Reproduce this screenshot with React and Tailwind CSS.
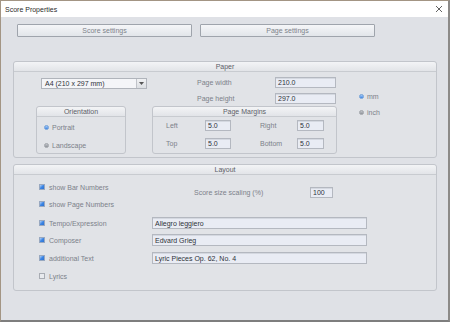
import React from "react";

const font = "font-['Liberation_Sans',Arial,sans-serif]";

function Group({ title, className, children }) {
    return (
        <div className={`border border-[#c2c5cb] rounded-[3px] bg-[#e1e3e7] flex flex-col ${className}`}>
            <div className="h-[10px] shrink-0 border-b border-[#c8cbd0] rounded-t-[3px] bg-linear-to-b from-[#f3f4f6] to-[#e2e4e8] flex items-center justify-center text-[7px] text-[#5c6068] leading-none">
                {title}
            </div>
            {children}
        </div>
    );
}

function Field({ value, className, tall }) {
    return (
        <div className={`${tall ? "h-[12px]" : "h-[11px]"} shrink-0 border border-[#b4b8c0] bg-[#e9ecf4] shadow-[inset_0_1px_0_#d4d8e0] flex items-center pl-[2px] text-[7px] text-[#2e3238] leading-none ${className}`}>
            {value}
        </div>
    );
}

function Radio({ on, label }) {
    return (
        <div className="h-[10px] flex items-center">
            <div className={`w-[5px] h-[5px] rounded-full ${on ? "bg-linear-to-b from-[#a9cdf5] to-[#3b82e6] border border-[#6f9fd8]" : "bg-linear-to-b from-[#c4c7cc] to-[#8e9299] border border-[#9ea2a8]"}`} />
            <span className="ml-[3px] text-[7px] text-[#7c818a] leading-none">{label}</span>
        </div>
    );
}

function Check({ on, label, labelWidth }) {
    return (
        <>
            <div className={`w-[6px] h-[6px] shrink-0 border ${on ? "border-[#98a8c0] bg-linear-to-br from-[#b6d2f4] via-[#3d86e4] to-[#2c6fd0]" : "border-[#a8acb3] bg-[#e8eaee]"}`} />
            <span className={`ml-[4px] text-[7px] text-[#7c818a] leading-none ${labelWidth || ""}`}>{label}</span>
        </>
    );
}

export default function App() {
    const rows = [
        { label: "Tempo/Expression", value: "Allegro leggiero", gap: "mt-[7px]" },
        { label: "Composer", value: "Edvard Grieg", gap: "mt-[5px]" },
        { label: "additional Text", value: "Lyric Pieces Op. 62, No. 4", gap: "mt-[6px]" },
    ];

    return (
        <div className={`${font} w-[450px] h-[322px] flex flex-col border border-[#a39584] border-r-[2px] border-r-[#8c8a88] border-b-[2px] border-b-[#7e7e7e] bg-[#dfe1e6] overflow-hidden`}>
            <div className="h-[16px] shrink-0 bg-white flex items-center justify-between pl-[4px] pr-[5px]">
                <span className="text-[7px] text-[#2b2b2b] leading-none">Score Properties</span>
                <svg width="8" height="8" viewBox="0 0 8 8">
                    <path d="M1 1 L7 7 M7 1 L1 7" stroke="#505050" strokeWidth="0.9" fill="none" />
                </svg>
            </div>

            <div className="flex gap-[8px] pl-[16px] mt-[7px]">
                {["Score settings", "Page settings"].map((t) => (
                    <div key={t} className="w-[175px] h-[13px] border border-[#9fa4ac] rounded-[1px] bg-linear-to-b from-[#f5f6f8] to-[#e2e5ea] flex items-center justify-center text-[7px] text-[#7d828a] leading-none">
                        {t}
                    </div>
                ))}
            </div>

            <Group title="Paper" className="ml-[12px] mt-[24px] w-[424px] h-[97px]">
                <div className="flex">
                    <div className="ml-[22px] w-[301px] flex flex-col">
                        <div className="flex">
                            <div className="ml-[5px] mt-[6px] w-[106px] h-[11px] border border-[#b0b4bb] bg-[#f4f5f8] flex items-center">
                                <span className="flex-1 pl-[3px] text-[7px] text-[#2e3238] leading-none">A4 (210 x 297 mm)</span>
                                <div className="w-[10px] h-full border-l border-[#c0c3c9] bg-linear-to-b from-[#f0f1f3] to-[#dcdfe3] flex items-center justify-center">
                                    <svg width="5" height="3" viewBox="0 0 5 3"><path d="M0 0 H5 L2.5 3 Z" fill="#555" /></svg>
                                </div>
                            </div>
                            <div className="ml-[50px] mt-[5px] flex flex-col gap-[5px]">
                                <div className="flex items-center">
                                    <span className="w-[78px] text-[7px] text-[#7c818a] leading-none">Page width</span>
                                    <Field value="210.0" className="w-[61px]" />
                                </div>
                                <div className="flex items-center">
                                    <span className="w-[78px] text-[7px] text-[#7c818a] leading-none">Page height</span>
                                    <Field value="297.0" className="w-[61px]" />
                                </div>
                            </div>
                        </div>

                        <div className="flex mt-[2px]">
                            <Group title="Orientation" className="w-[90px] h-[48px]">
                                <div className="pl-[7px] mt-[5px] flex flex-col gap-[8px]">
                                    <Radio on label="Portrait" />
                                    <Radio label="Landscape" />
                                </div>
                            </Group>
                            <Group title="Page Margins" className="ml-[26px] w-[185px] h-[48px]">
                                <div className="pl-[13px] mt-[3px] flex flex-col gap-[7px]">
                                    <div className="flex items-center">
                                        <span className="w-[39px] text-[7px] text-[#7c818a] leading-none">Left</span>
                                        <Field value="5.0" className="w-[26px]" />
                                        <span className="ml-[29px] w-[37px] text-[7px] text-[#7c818a] leading-none">Right</span>
                                        <Field value="5.0" className="w-[27px]" />
                                    </div>
                                    <div className="flex items-center">
                                        <span className="w-[39px] text-[7px] text-[#7c818a] leading-none">Top</span>
                                        <Field value="5.0" className="w-[26px]" />
                                        <span className="ml-[29px] w-[37px] text-[7px] text-[#7c818a] leading-none">Bottom</span>
                                        <Field value="5.0" className="w-[27px]" />
                                    </div>
                                </div>
                            </Group>
                        </div>
                    </div>

                    <div className="ml-[22px] mt-[19px] flex flex-col gap-[6px]">
                        <Radio on label="mm" />
                        <Radio label="inch" />
                    </div>
                </div>
            </Group>

            <Group title="Layout" className="ml-[12px] mt-[6px] w-[424px] h-[127px]">
                <div className="pl-[25px] flex flex-col">
                    <div className="flex mt-[6px]">
                        <div className="w-[155px] flex flex-col gap-[5px]">
                            <div className="h-[12px] flex items-center"><Check on label="show Bar Numbers" /></div>
                            <div className="h-[12px] flex items-center"><Check on label="show Page Numbers" /></div>
                        </div>
                        <div className="mt-[6px] h-[11px] flex items-center">
                            <span className="w-[116px] text-[7px] text-[#7c818a] leading-none">Score size scaling (%)</span>
                            <Field value="100" className="w-[23px]" />
                        </div>
                    </div>
                    {rows.map((r) => (
                        <div key={r.label} className={`h-[12px] flex items-center ${r.gap}`}>
                            <Check on label={r.label} labelWidth="w-[103px]" />
                            <Field tall value={r.value} className="w-[215px]" />
                        </div>
                    ))}
                    <div className="h-[12px] flex items-center mt-[6px]">
                        <Check label="Lyrics" />
                    </div>
                </div>
            </Group>
        </div>
    );
}
